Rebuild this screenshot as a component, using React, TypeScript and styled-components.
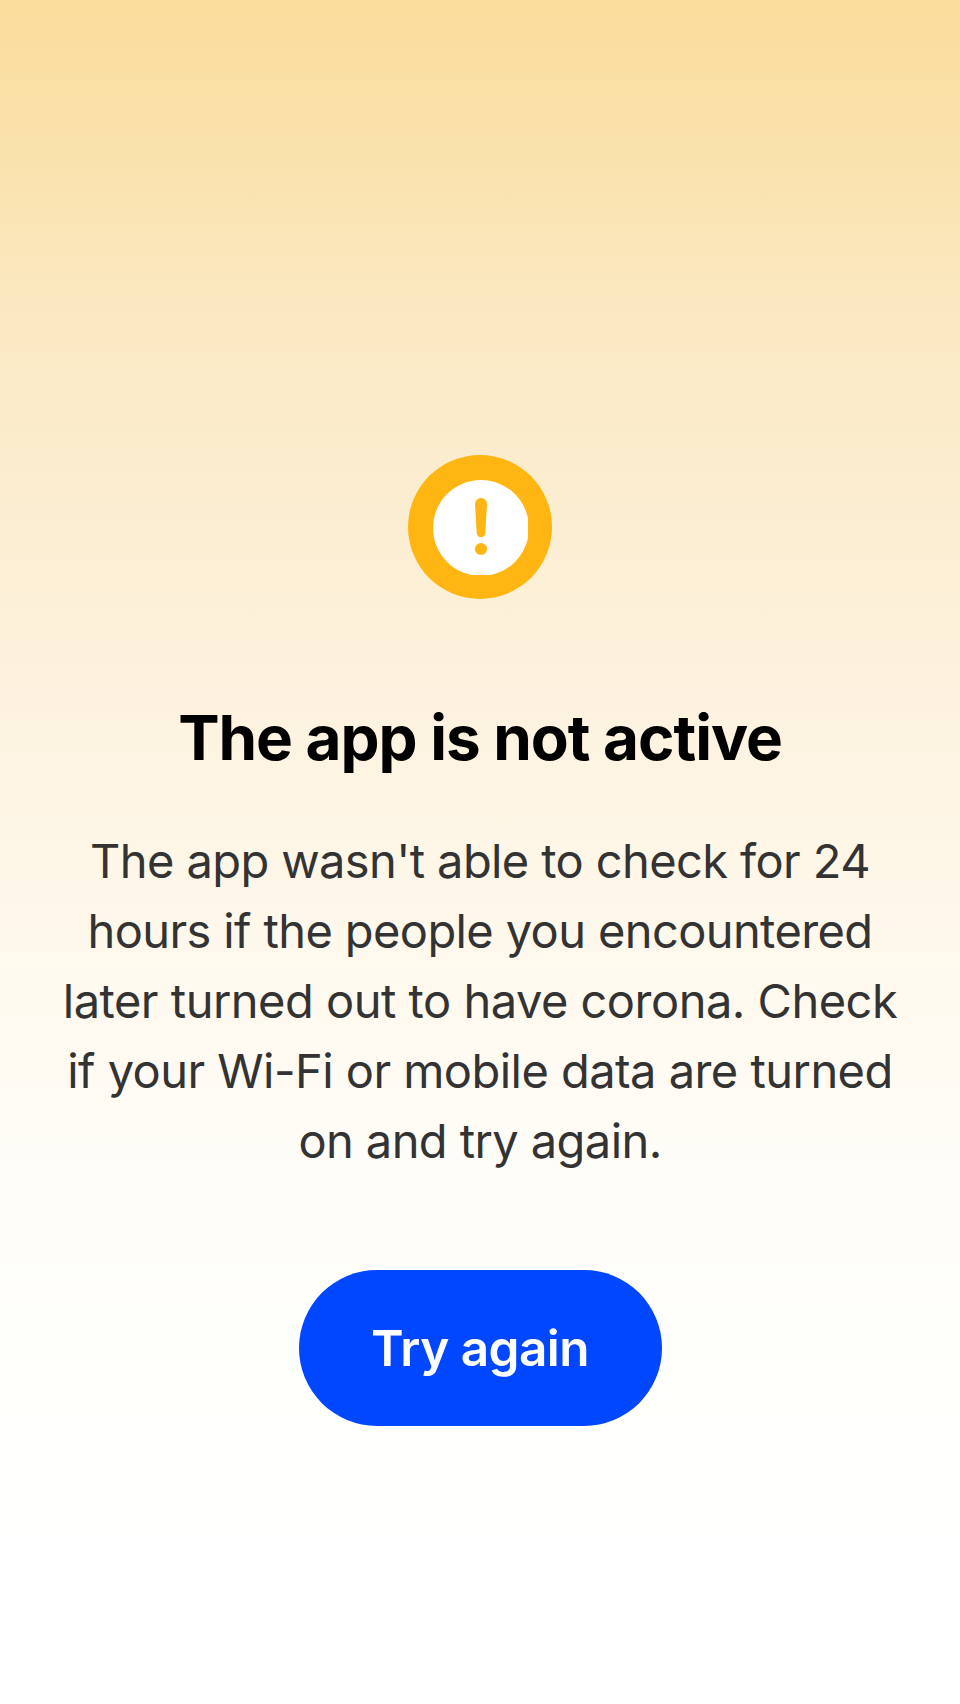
import React from 'react';
import styled, { createGlobalStyle } from 'styled-components';

const GlobalStyle = createGlobalStyle`
  * { box-sizing: border-box; }
  body { margin: 0; }
`;

const Screen = styled.main`
  width: 960px;
  height: 1704px;
  padding-top: 455px;
  display: flex;
  flex-direction: column;
  align-items: center;
  font-family: Inter, sans-serif;
  text-align: center;
  background: linear-gradient(180deg, #fadc9b 0%, #fae4b3 12%, #fbe8c1 18%, #fbebca 24%, #fcefd5 33%, #fdf2df 41%, #fef6e7 50%, #fff9ef 58%, #fffcf6 66%, #fefdf9 72%, #fffffc 82%, #ffffff 92%);
`;

const StatusIcon = styled.svg`
  display: block;
  width: 144px;
  height: 144px;
`;

const Title = styled.h1`
  margin: 97px 0 0;
  font-size: 62px;
  line-height: 84px;
  font-weight: 700;
  letter-spacing: -1.05px;
  color: #000;
  white-space: nowrap;
`;

const Message = styled.p`
  margin: 46px 0 0;
  font-size: 47px;
  line-height: 70px;
  color: #333;
`;

const Line = styled.span<{ $tracking: number }>`
  display: block;
  white-space: nowrap;
  letter-spacing: ${({ $tracking }) => $tracking}px;
`;

const RetryButton = styled.button`
  margin-top: 94px;
  width: 363px;
  height: 156px;
  border: 0;
  border-radius: 78px;
  background: #0047ff;
  color: #fff;
  font: 600 49.5px/60px Inter, sans-serif;
  letter-spacing: -0.55px;
`;

const lines = [
  { text: "The app wasn't able to check for 24", tracking: -0.6 },
  { text: 'hours if the people you encountered', tracking: -0.61 },
  { text: 'later turned out to have corona. Check', tracking: -0.5 },
  { text: 'if your Wi-Fi or mobile data are turned', tracking: -0.54 },
  { text: 'on and try again.', tracking: -0.58 },
];

export default function App() {
  return (
    <>
      <GlobalStyle />
      <Screen>
        <StatusIcon viewBox="0 0 144 144" aria-hidden="true">
          <circle cx="72" cy="72" r="72" fill="#ffb612" />
          <svg x="25" y="25" width="95" height="95">
            <circle cx="48" cy="48" r="48" fill="#fff" />
          </svg>
          <path d="M67 49a6 6 0 0 1 12 0l-1.7 28.9a4.3 4.3 0 0 1-8.6 0z" fill="#ffb612" />
          <circle cx="73" cy="94" r="6.1" fill="#ffb612" />
        </StatusIcon>
        <Title>The app is not active</Title>
        <Message>
          {lines.map(({ text, tracking }) => (
            <Line key={text} $tracking={tracking}>{text}</Line>
          ))}
        </Message>
        <RetryButton type="button">Try again</RetryButton>
      </Screen>
    </>
  );
}
